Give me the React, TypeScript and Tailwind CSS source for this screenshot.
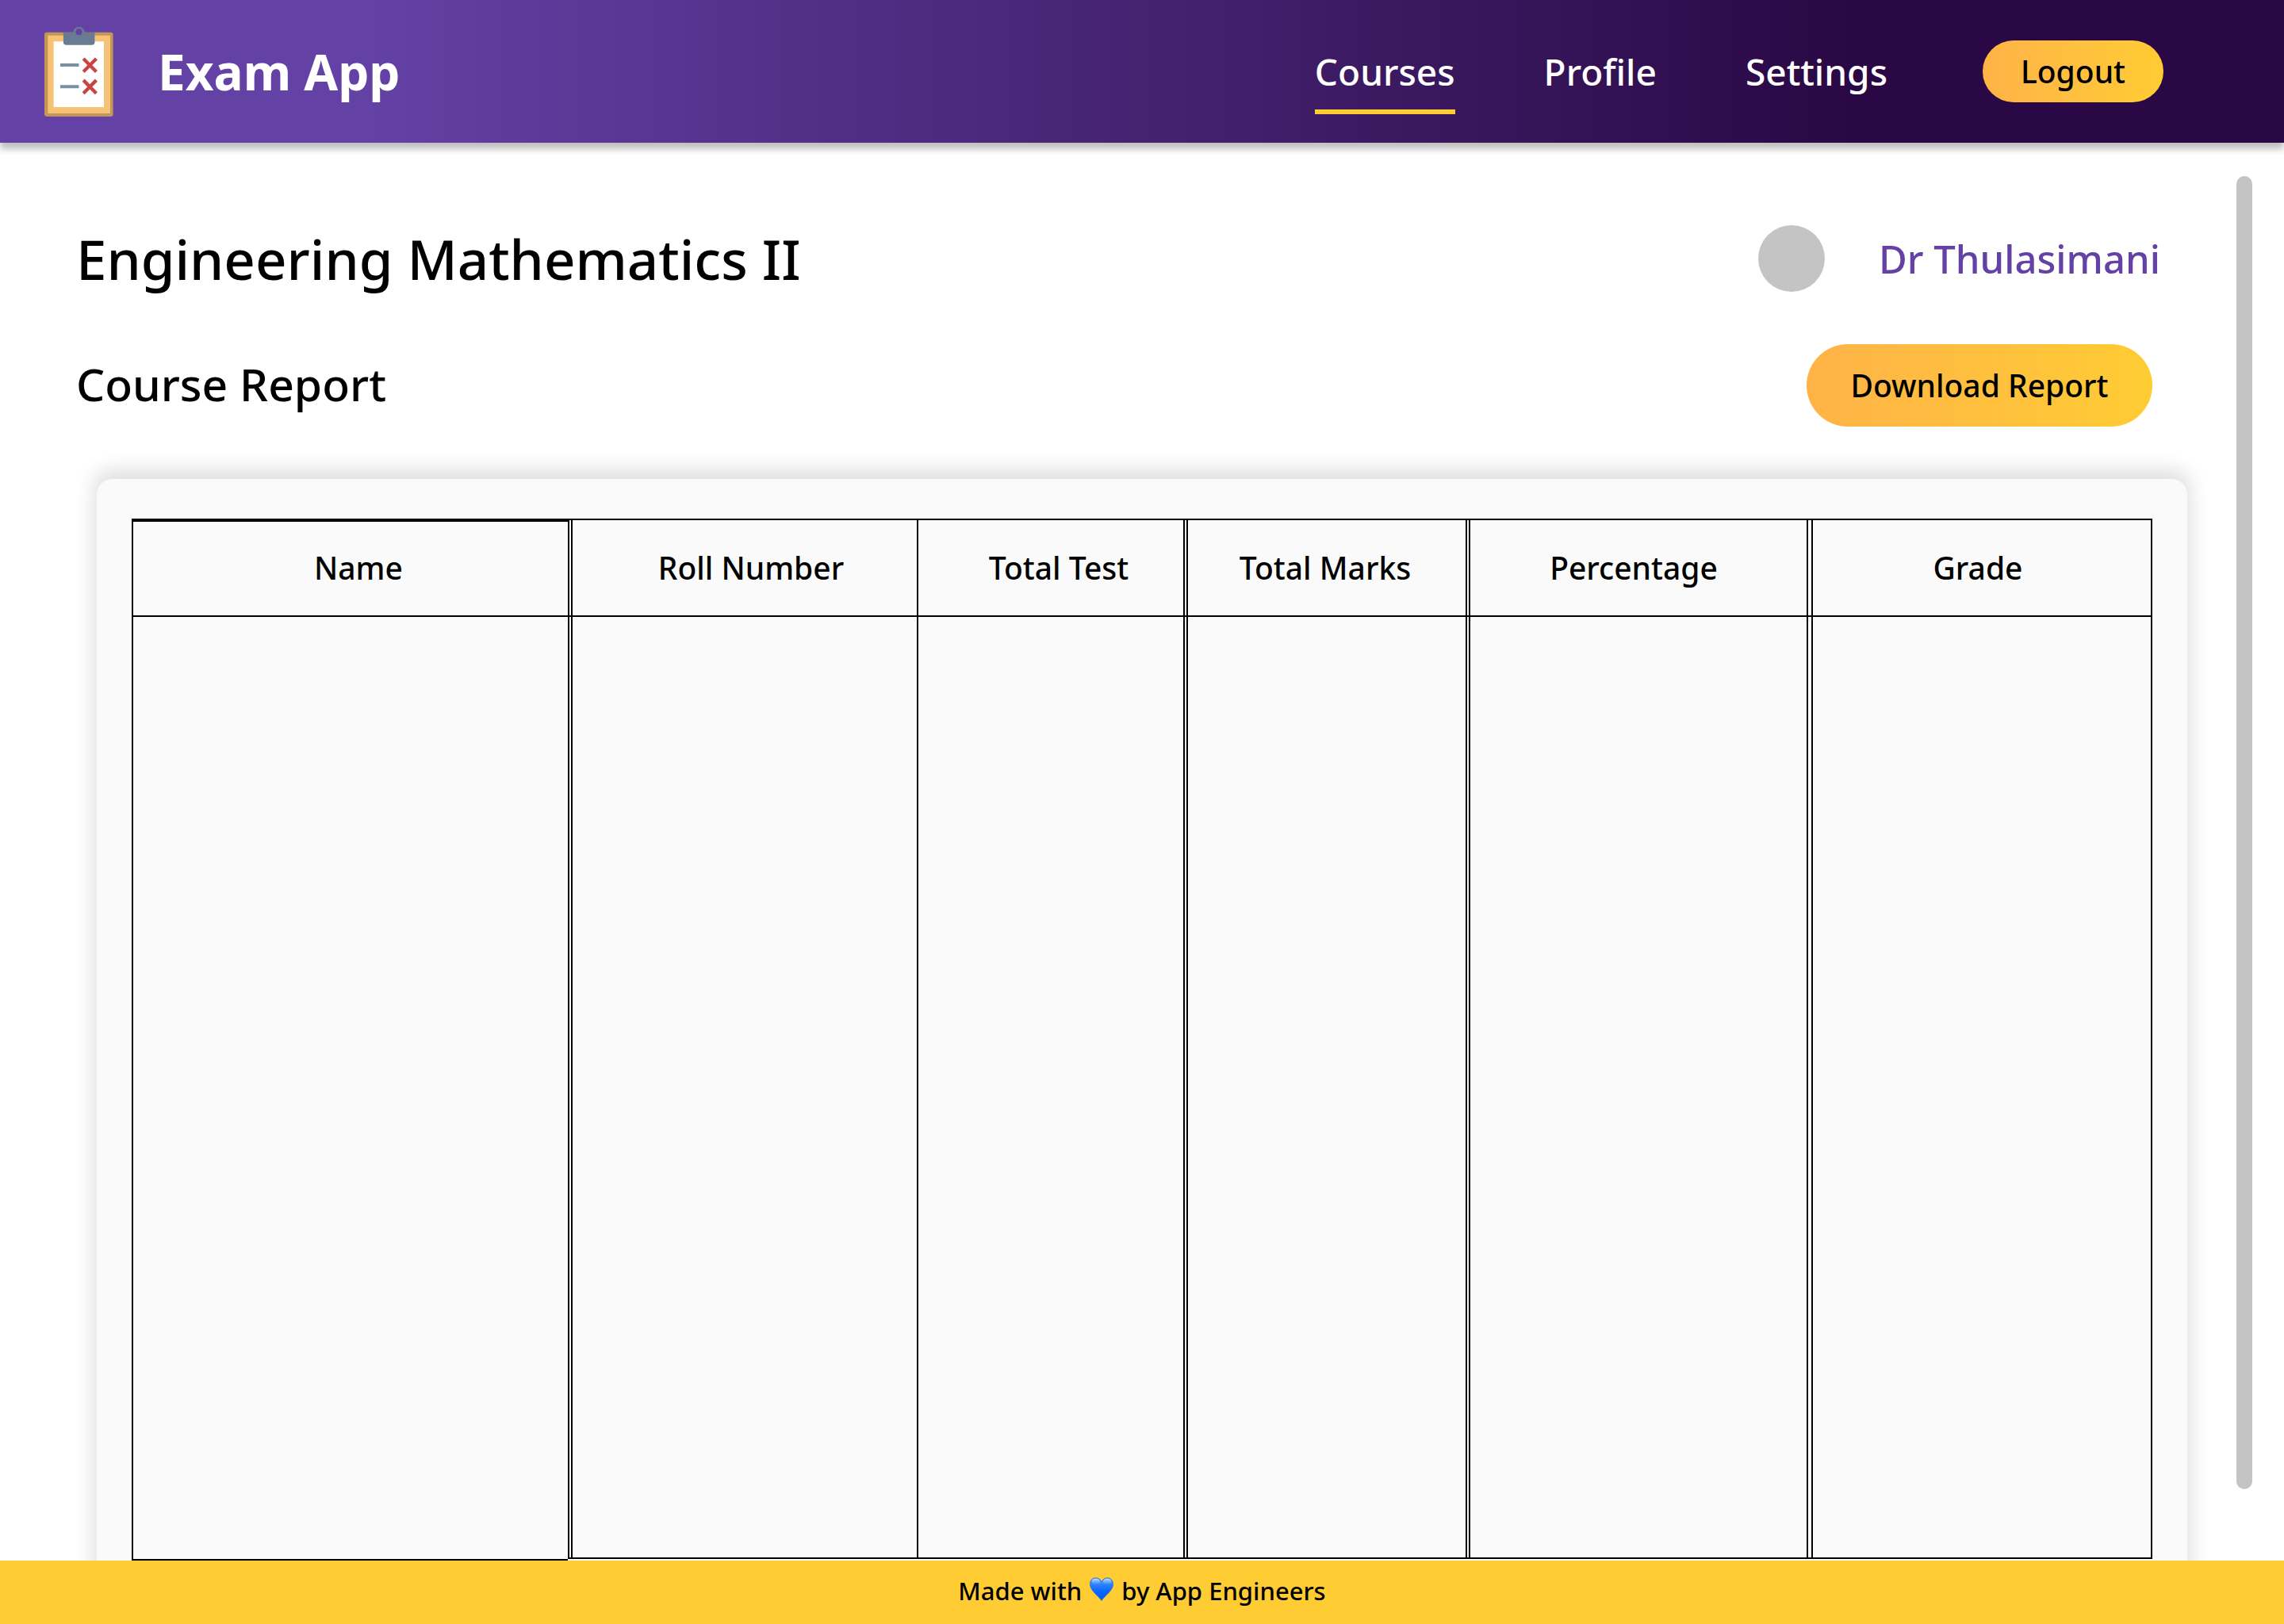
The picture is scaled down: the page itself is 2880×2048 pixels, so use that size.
import React from 'react';

const columns = [
  { label: 'Name', col: 'w-[550px]', head: 'pl-5 border-l-2 shadow-[inset_0_2px_0_#000]', body: 'border-l-2 shadow-[0_2px_0_#000]' },
  { label: 'Roll Number', col: 'w-[440px]', head: 'pl-5 border-l-2 shadow-[inset_2px_0_0_#fafafa,inset_4px_0_0_#000]', body: 'border-b-2 border-l-2 shadow-[inset_2px_0_0_#fafafa,inset_4px_0_0_#000]' },
  { label: 'Total Test', col: 'w-[336px]', head: 'pl-5 border-l-2', body: 'border-b-2 border-l-2' },
  { label: 'Total Marks', col: 'w-[356px]', head: 'border-l-2 shadow-[inset_2px_0_0_#fafafa,inset_4px_0_0_#000]', body: 'border-b-2 border-l-2 shadow-[inset_2px_0_0_#fafafa,inset_4px_0_0_#000]' },
  { label: 'Percentage', col: 'w-[430px]', head: 'pr-2 border-l-2 shadow-[inset_2px_0_0_#fafafa,inset_4px_0_0_#000]', body: 'border-b-2 border-l-2 shadow-[inset_2px_0_0_#fafafa,inset_4px_0_0_#000]' },
  { label: 'Grade', col: 'w-[436px]', head: 'pr-1 border-x-2 shadow-[inset_4px_0_0_#fafafa,inset_6px_0_0_#000]', body: 'border-b-2 border-x-2 shadow-[inset_4px_0_0_#fafafa,inset_6px_0_0_#000]' },
];

function ClipboardLogo() {
  return (
    <svg className="h-[114px] w-[87px] shrink-0" viewBox="46 36 262 343" aria-hidden="true">
      <rect x="46" y="59" width="261" height="320" rx="10" fill="#C29656" />
      <rect x="59" y="71" width="237" height="296" fill="#F5C276" />
      <rect x="81" y="94" width="191" height="249" fill="#fff" />
      <path
        fill="#697B91"
        d="M118 60 H155 A22 22 0 1 1 199 60 H237 V97 Q237 107 227 107 H128 Q118 107 118 97 Z"
      />
      <circle cx="177" cy="58" r="12" fill="#6441A5" />
      <path d="M106 183.500 H177 M106 265.500 H177" stroke="#7B8FA3" strokeWidth="12" />
      <path
        d="M194 159 L243 209 M243 159 L194 209 M194 241 L243 291 M243 241 L194 291"
        stroke="#C94444"
        strokeWidth="13"
      />
    </svg>
  );
}

function BlueHeart() {
  return (
    <svg className="mb-1 h-[30px] w-[30px]" viewBox="0 0 30 30" role="img" aria-label="love">
      <defs>
        <linearGradient id="heart-fill" x1="0" y1="0" x2="0" y2="1">
          <stop offset="0" stopColor="#5FA8FF" />
          <stop offset="0.3" stopColor="#2F80FF" />
          <stop offset="0.6" stopColor="#0A66FF" />
          <stop offset="1" stopColor="#0058F5" />
        </linearGradient>
        <linearGradient id="heart-shine" x1="0" y1="0" x2="0" y2="1">
          <stop offset="0" stopColor="#D6EAFF" stopOpacity="0.9" />
          <stop offset="1" stopColor="#7DB8FF" stopOpacity="0" />
        </linearGradient>
      </defs>
      <path
        d="M15 29.500 C13.500 27 9 23 5 18.500 C2 15 0.500 12 0.500 8.500 C0.500 4 3.500 0.800 7.700 0.800 C11 0.800 13.700 2.700 15 5.800 C16.300 2.700 19 0.800 22.300 0.800 C26.500 0.800 29.500 4 29.500 8.500 C29.500 12 28 15 25 18.500 C21 23 16.500 27 15 29.500 Z"
        fill="url(#heart-fill)"
        stroke="#1F6FE0"
        strokeWidth="0.8"
      />
      <ellipse cx="7.800" cy="5.500" rx="5.200" ry="3.800" fill="url(#heart-shine)" />
      <ellipse cx="22.200" cy="5.500" rx="5.200" ry="3.800" fill="url(#heart-shine)" />
    </svg>
  );
}

export default function App() {
  const link = 'border-b-[6px] pt-6 pb-[18px] text-[46px] leading-[60px] text-white';
  return (
    <div className="flex h-screen flex-col overflow-hidden bg-white font-['Noto_Sans','Open_Sans',sans-serif] font-medium text-black">
      <header className="relative z-10 flex h-[180px] shrink-0 items-center justify-between bg-linear-to-r from-[#6441A5] from-16% to-[#2A0845] to-81% pr-[152px] pl-14 shadow-[0_8px_8px_rgba(0,0,0,0.25)]">
        <div className="flex items-center gap-14">
          <ClipboardLogo />
          <span className="text-[62px] leading-[80px] font-bold text-white">Exam App</span>
        </div>
        <nav className="flex items-center gap-[112px]">
          <a href="#courses" aria-current="page" className={`${link} border-[#FFCC33]`}>Courses</a>
          <a href="#profile" className={`${link} border-transparent`}>Profile</a>
          <a href="#settings" className={`${link} border-transparent`}>Settings</a>
          <button
            type="button"
            className="ml-2 h-[78px] w-[228px] rounded-full bg-linear-to-r from-[#FFB347] to-[#FFCC33] text-[39px] leading-[52px]"
          >
            Logout
          </button>
        </nav>
      </header>

      <main className="flex min-h-0 flex-1">
        <div className="flex min-w-0 flex-1 flex-col pt-[104px]">
          <div className="flex h-[84px] items-center justify-between pr-24 pl-24">
            <h1 className="text-[69px] leading-[84px]">Engineering Mathematics II</h1>
            <div className="flex items-center gap-[68px]">
              <div className="size-[84px] rounded-full bg-[#C4C4C4]" />
              <span className="text-[49px] leading-[64px] text-[#6441A5]">Dr Thulasimani</span>
            </div>
          </div>

          <div className="mt-[66px] flex items-center justify-between pr-[106px] pl-24">
            <h2 className="pb-1 text-[57px] leading-[76px]">Course Report</h2>
            <button
              type="button"
              className="h-[104px] w-[436px] rounded-full bg-linear-to-r from-[#FFB347] to-[#FFCC33] text-[39px] leading-[52px]"
            >
              Download Report
            </button>
          </div>

          <section className="mt-[66px] mr-[62px] -mb-10 ml-[122px] flex flex-1 rounded-t-[20px] bg-[#FAFAFA] px-11 pt-[50px] pb-[42px] shadow-[0_-8px_24px_4px_rgba(0,0,0,0.13)]">
            <table className="w-full table-fixed border-separate border-spacing-0">
              <colgroup>
                {columns.map((c) => (
                  <col key={c.label} className={c.col} />
                ))}
              </colgroup>
              <thead>
                <tr>
                  {columns.map((c) => (
                    <th
                      key={c.label}
                      scope="col"
                      className={`h-[124px] border-y-2 border-black text-center text-[39px] leading-[52px] font-medium ${c.head}`}
                    >
                      {c.label}
                    </th>
                  ))}
                </tr>
              </thead>
              <tbody>
                <tr className="h-full">
                  {columns.map((c) => (
                    <td key={c.label} className={`border-black ${c.body}`} />
                  ))}
                </tr>
              </tbody>
            </table>
          </section>
        </div>
        <div className="mt-[42px] mr-10 mb-[90px] w-5 rounded-full bg-[#C4C4C4]" />
      </main>

      <footer className="relative z-10 flex h-20 shrink-0 items-center justify-center gap-[10px] bg-[#FFCC33] pb-1 text-[31px] leading-[42px]">
        <span>Made with</span>
        <BlueHeart />
        <span>by App Engineers</span>
      </footer>
    </div>
  );
}
